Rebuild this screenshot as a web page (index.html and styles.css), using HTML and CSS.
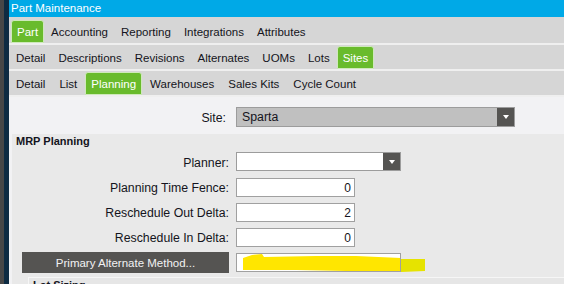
FILE: index.html
```html
<!DOCTYPE html>
<html lang="en">
<head>
  <meta charset="UTF-8">
  <title>Part Maintenance</title>
  <link rel="stylesheet" href="styles.css">
</head>
<body>

  <div class="screen">
    <div class="edge"></div>

    <div class="window">
      <div class="titlebar">Part Maintenance</div>

      <div class="tabrow top">
        <span class="tab active">Part</span>
        <span class="tab">Accounting</span>
        <span class="tab">Reporting</span>
        <span class="tab">Integrations</span>
        <span class="tab">Attributes</span>
      </div>
      <div class="tabrow">
        <span class="tab">Detail</span>
        <span class="tab">Descriptions</span>
        <span class="tab">Revisions</span>
        <span class="tab">Alternates</span>
        <span class="tab">UOMs</span>
        <span class="tab">Lots</span>
        <span class="tab active">Sites</span>
      </div>
      <div class="tabrow wide">
        <span class="tab">Detail</span>
        <span class="tab">List</span>
        <span class="tab active">Planning</span>
        <span class="tab">Warehouses</span>
        <span class="tab">Sales Kits</span>
        <span class="tab">Cycle Count</span>
      </div>

      <div class="content">
        <div class="site-row">
          <label class="site-label">Site:</label>
          <div class="combo combo-site">
            <span class="combo-value">Sparta</span>
            <span class="combo-btn"><i class="arrow"></i></span>
          </div>
        </div>

        <div class="group">
          <div class="group-title">MRP Planning</div>

          <div class="field">
            <label>Planner:</label>
            <div class="combo combo-planner">
              <span class="combo-value"></span>
              <span class="combo-btn"><i class="arrow"></i></span>
            </div>
          </div>
          <div class="field">
            <label>Planning Time Fence:</label>
            <input class="num" type="text" value="0">
          </div>
          <div class="field">
            <label>Reschedule Out Delta:</label>
            <input class="num" type="text" value="2">
          </div>
          <div class="field">
            <label>Reschedule In Delta:</label>
            <input class="num" type="text" value="0">
          </div>
          <div class="field">
            <button class="action">Primary Alternate Method...</button>
            <div class="redact-wrap">
              <input class="text" type="text" value="">
              <!-- marker scribble over the value -->
              <svg class="redact" width="190" height="20" viewBox="0 0 190 20">
                <polygon points="7,5 16,2 26,1 28,4 80,3 120,3 165,5 165,19 110,18 60,17 7,17" fill="#ffe600"/>
                <polygon points="165,6 189,6 189,18 165,19" fill="#e6e300"/>
                <rect x="0.5" y="0.5" width="164" height="18" fill="none" stroke="#a0a0a0"/>
              </svg>
            </div>
          </div>

          <div class="subgroup">
            <div class="group-title">Lot Sizing</div>
          </div>
        </div>
      </div>
    </div>
  </div>

</body>
</html>
```

FILE: styles.css
```css
body {
  margin: 0;
  font-family: "Liberation Sans", Arial, sans-serif;
  color: #141420;
  background-color: #f2f2f4;
  overflow: hidden;
}

.screen {
  display: flex;
  height: 284px;
  overflow: hidden;
}

.edge {
  width: 5px;
  border-left: 4px solid #474747;
  background-color: #0e2b42;
  flex-shrink: 0;
}

.window {
  flex: 1;
  display: flex;
  flex-direction: column;
  min-width: 0;
}

.titlebar {
  height: 17px;
  line-height: 17px;
  padding-left: 2px;
  background-color: #00a9e7;
  color: #fff;
  font-size: 11.5px;
}

/* tab strips */
.tabrow {
  display: flex;
  gap: 1px;
  height: 23px;
  padding: 1px 0 0 1px;
  background-color: #d6d6d6;
  border-bottom: 2px solid #efefef;
}

.tabrow.top {
  padding: 3px 0 0 2px;
}

.tabrow.wide {
  gap: 2px;
}

.tab {
  height: 23px;
  box-sizing: border-box;
  padding: 3px 5px 0;
  line-height: 16px;
  border: 1px solid transparent;
  font-size: 11.5px;
  white-space: nowrap;
}

.tab.active {
  background-color: #69bb2c;
  border-color: #cfe9bb;
  border-radius: 3px 3px 0 0;
  color: #fff;
}

/* form area */
.content {
  flex: 1;
  padding: 10px 0 0 3px;
  background-color: #f2f2f4;
  font-size: 12.3px;
}

.site-row {
  display: flex;
  height: 20px;
}

.site-label {
  width: 214px;
  margin-right: 10px;
  text-align: right;
  padding-top: 2px;
  line-height: 18px;
}

.combo {
  display: flex;
  height: 20px;
  box-sizing: border-box;
  border: 1px solid #9c9c9c;
  background-color: #fff;
}

.combo-site {
  width: 279px;
  background-color: #c0c0c0;
}

.combo-planner {
  width: 165px;
  height: 19px;
}

.combo-value {
  flex: 1;
  padding-left: 5px;
  line-height: 18px;
}

.combo-btn {
  width: 17px;
  background-color: #555452;
  display: flex;
  align-items: center;
  justify-content: center;
}

.arrow {
  width: 0;
  height: 0;
  border-left: 3px solid transparent;
  border-right: 3px solid transparent;
  border-top: 4px solid #fff;
}

.group {
  margin-top: 7px;
  background-color: #e9e9e9;
  height: 200px;
}

.group-title {
  height: 18px;
  line-height: 15px;
  padding-left: 4px;
  font-size: 11px;
  font-weight: bold;
}

.field {
  display: flex;
  height: 20px;
  margin-bottom: 5px;
}

.field label {
  width: 217px;
  margin-right: 7px;
  text-align: right;
  padding-top: 2px;
  line-height: 18px;
}

.field input {
  height: 19px;
  box-sizing: border-box;
  border: 1px solid #a0a0a0;
  background-color: #fff;
  font-family: "Liberation Sans", Arial, sans-serif;
  font-size: 12px;
  color: #141420;
  padding: 0 3px;
  margin: 1px 0 0;
}

.field input.num {
  width: 119px;
  text-align: right;
}

.action {
  width: 207px;
  height: 21px;
  margin: 0 7px 0 10px;
  border: none;
  background-color: #555452;
  color: #f2f2f2;
  font-family: "Liberation Sans", Arial, sans-serif;
  font-size: 11.5px;
  padding: 0;
}

.redact-wrap {
  position: relative;
  margin-top: 1px;
}

.redact-wrap input.text {
  width: 165px;
  margin: 0;
}

.redact {
  position: absolute;
  left: 0;
  top: 0;
}

.subgroup {
  margin: 3px 0 0 16px;
  border-top: 1px solid #f6f6f6;
  border-left: 1px solid #f6f6f6;
  background-color: #e6e6e6;
  height: 40px;
}
```
